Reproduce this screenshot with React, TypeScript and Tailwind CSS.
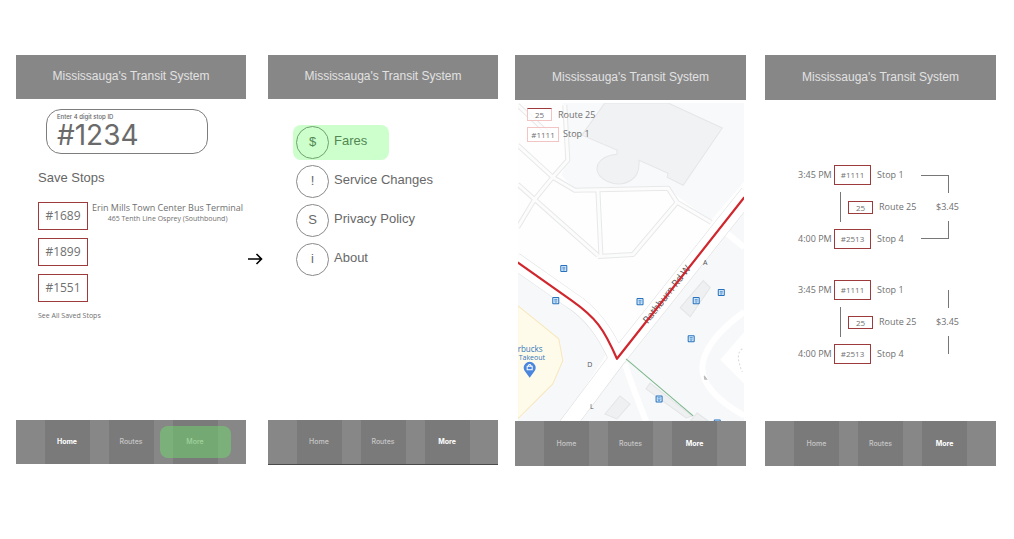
import type { ReactNode } from "react";

const TABS = ["Home", "Routes", "More"] as const;
type Tab = (typeof TABS)[number];

interface ScreenProps {
  active: Tab;
  highlighted?: Tab;
  tall?: boolean;
  underlined?: boolean;
  children: ReactNode;
}

function Screen({ active, highlighted, tall, underlined, children }: ScreenProps) {
  const bar = tall ? "h-[45px]" : "h-11";
  return (
    <section className="flex min-w-0 flex-col">
      <header className={`${bar} flex items-center justify-center bg-[#878787]`}>
        <h1 className="pb-0.5 font-['Liberation_Sans',sans-serif] text-[12px] leading-4 whitespace-nowrap text-[#e2e2e2]">
          Mississauga&apos;s Transit System
        </h1>
      </header>
      <main className="flex min-h-[321px] flex-col">{children}</main>
      <nav
        className={`${bar} flex justify-center gap-[19px] bg-[#878787] ${
          underlined ? "shadow-[0_1px_0_#4a4a4a]" : ""
        }`}
      >
        {TABS.map((tab) => (
          <button
            key={tab}
            type="button"
            className={`relative w-[45px] bg-[#7a7a7a] font-[Inter,sans-serif] text-[7px] leading-3 ${
              tab === active ? "font-bold text-white" : "font-medium text-[#c6c6c6]"
            }`}
          >
            {tab}
            {tab === highlighted && (
              <span className="absolute inset-x-[-13px] inset-y-1.5 rounded-lg bg-[#6fe26b]/45" />
            )}
          </button>
        ))}
      </nav>
    </section>
  );
}

function HomeScreen() {
  return (
    <Screen active="Home" highlighted="More">
      <div className="mt-2.5 mr-[38px] ml-[30px] flex h-[45px] flex-col rounded-[15px] border border-[#7d7d7d] pt-1 pl-2.5">
        <label
          htmlFor="stop-id"
          className="font-[Inter,sans-serif] text-[6px] leading-[6px] font-medium text-[#666]"
        >
          Enter 4 digit stop ID
        </label>
        <input
          id="stop-id"
          defaultValue="#1234"
          className="h-[30px] w-full bg-transparent font-[Inter,sans-serif] text-[28px] leading-[30px] text-[#6a6a6a] outline-none"
        />
      </div>
      <div className="flex flex-col pl-[22px]">
        <h2 className="mt-4 font-['Liberation_Sans',sans-serif] text-[13px] leading-4 text-[#666]">
          Save Stops
        </h2>
        <ul className="mt-4 flex flex-col gap-2 font-['Open_Sans',sans-serif] text-[#707070]">
          <li className="flex gap-1">
            <StopNumber>#1689</StopNumber>
            <div className="text-center whitespace-nowrap">
              <p className="text-[9px] leading-3">Erin Mills Town Center Bus Terminal</p>
              <p className="text-[7px] leading-[10px]">465 Tenth Line Osprey (Southbound)</p>
            </div>
          </li>
          <li className="flex">
            <StopNumber>#1899</StopNumber>
          </li>
          <li className="flex">
            <StopNumber>#1551</StopNumber>
          </li>
        </ul>
        <a
          href="#saved"
          className="mt-2 font-['Open_Sans',sans-serif] text-[7px] leading-3 text-[#707070]"
        >
          See All Saved Stops
        </a>
      </div>
    </Screen>
  );
}

function StopNumber({ children }: { children: ReactNode }) {
  return (
    <a
      href="#stop"
      className="flex h-7 w-[50px] items-center justify-center border border-[#9c3a3c] text-[12px] leading-4"
    >
      {children}
    </a>
  );
}

const MENU = [
  { mark: "$", label: "Fares" },
  { mark: "!", label: "Service Changes" },
  { mark: "S", label: "Privacy Policy" },
  { mark: "i", label: "About" },
];

function MoreScreen() {
  return (
    <Screen active="More" underlined>
      <ul className="mt-[27px] flex flex-col items-start gap-1.5 pl-7 font-['Liberation_Sans',sans-serif] text-[13px] leading-4 text-[#686868]">
        {MENU.map(({ mark, label }, i) => (
          <li key={label} className="relative">
            <a href="#menu" className="flex items-center gap-[5px]">
              <span className="flex size-[33px] items-center justify-center rounded-full border border-[#8a8a8a] pb-0.5">
                {mark}
              </span>
              <span className="pb-1">{label}</span>
            </a>
            {i === 0 && (
              <span className="absolute -inset-y-px -left-[3px] w-24 rounded-lg bg-[#00ff00]/20" />
            )}
          </li>
        ))}
      </ul>
    </Screen>
  );
}

const BUS_STOPS = [
  [46, 165],
  [38, 197],
  [122, 198],
  [178, 197],
  [203, 189],
  [173, 235],
  [141, 295],
  [199, 319],
];

const LANES =
  "M0 42 L35 74 L57 87 L150 85 L159 99 L193 119 M47 2 L50 57 L35 74 L17 96 L0 124 M0 81 L80 152 M80 87 L83 152 M159 99 L115 151 L80 153 M0 2 L30 30";

function TransitMap() {
  return (
    <svg
      viewBox="0 0 226 317"
      preserveAspectRatio="xMidYMid slice"
      className="absolute inset-0 size-full"
      role="img"
      aria-label="Route map"
    >
      <rect width="226" height="317" fill="#fefefe" />
      <path d="M45 0 L50 20 L49 57 L44 72 L58 87 L149 85 L192 118 L226 78 V0Z" fill="#f8f9fa" />
      <path d="M0 165 L55 203 L80 225 L92 245 L45 317 H0Z" fill="#f7f8fa" />
      <path d="M226 105 L107 255 L60 317 H226Z" fill="#f7f8fa" />
      <path d="M0 202 L41 235 L45 257 L35 280 L0 315Z" fill="#fffbea" stroke="#f8e6bd" />
      <path
        d="M87 0 H150 L204 25 L165 82 L149 74 L150 70 L121 57 Q122 72 113 77 Q102 84 89 78 Q76 71 80 61 Q85 52 99 51 V47 L64 32Z"
        fill="#f1f2f3"
        stroke="#e5e6e7"
      />
      <g fill="none" strokeLinejoin="round">
        <path d={LANES} stroke="#e7e8e9" strokeWidth="5" />
        <path d={LANES} stroke="#fcfcfc" strokeWidth="3" />
        <path
          d="M205 127 L226 144 M107 260 Q115 285 128 317 M226 208 Q185 238 184 264 Q184 288 226 312"
          stroke="#fff"
          strokeWidth="6"
        />
        <path d="M226 228 L202 256 L226 280" fill="#fff" stroke="none" />
        <path
          d="M230 90 L99 255 L48 323 M-3 157 L54 197 Q82 215 99 255"
          stroke="#dcdddf"
          strokeWidth="17"
        />
        <path
          d="M230 90 L99 255 L48 323 M-3 157 L54 197 Q82 215 99 255"
          stroke="#fff"
          strokeWidth="16"
        />
      </g>
      <g fill="#eff0f1" stroke="#e4e5e6">
        <path d="M185 177 L192 184 L172 213 L162 204Z" />
        <path d="M102 292 L112 300 L99 315 L87 310Z" />
        <path d="M132 279 L174 312 L168 314 L128 285Z" />
        <path d="M179 309 L190 317 H172Z" />
      </g>
      <path d="M224 245 Q216 250 224 268" fill="none" stroke="#d8d8d8" strokeDasharray="2 2" />
      <path d="M108 255 L175 312" stroke="#79b68a" strokeWidth="1" />
      <text
        transform="translate(149 191) rotate(-52)"
        textAnchor="middle"
        y="3"
        className="fill-[#585858] font-['Open_Sans',sans-serif] text-[10px]"
      >
        Rathburn Rd W
      </text>
      <path
        d="M0 159 L54 197 C78 214 86 225 99 255 L226 94"
        fill="none"
        stroke="#d0262d"
        strokeWidth="2.2"
        strokeLinejoin="round"
      />
      {BUS_STOPS.map(([x, y]) => (
        <g key={`${x}-${y}`} transform={`translate(${x} ${y})`}>
          <rect x="-3" y="-3" width="6" height="6" rx="0.5" fill="#d9ebfb" stroke="#2671bd" />
          <path d="M-1.500 -1.200 H1.500 M-1.500 0.300 H1.500 M-1 1.500 H1" fill="none" stroke="#3e86cc" strokeWidth="0.8" />
        </g>
      ))}
      <g className="font-['Open_Sans',sans-serif] text-[7px]" fill="#555" textAnchor="middle">
        <text x="187" y="161">A</text>
        <text x="72" y="263">D</text>
        <text x="74" y="305">L</text>
      </g>
      <path d="M186 272 L188.500 275.500 L186.500 275.500Z" fill="#bbb" stroke="#bbb" />
      <g className="font-['Open_Sans',sans-serif]" fill="#3478bb">
        <text x="0" y="248" className="text-[8px]">
          rbucks
        </text>
        <text x="1" y="256" className="text-[7px]">
          Takeout
        </text>
      </g>
      <path d="M12 274 L8 268.500 A6 6 0 1 1 16 268.500Z" fill="#4a86dd" />
      <path
        d="M9.500 262.500 H14.500 V266 H9.500Z M10.500 262 Q12 259.500 13.500 262"
        fill="none"
        stroke="#fff"
      />
    </svg>
  );
}

function MapScreen() {
  return (
    <Screen active="More" tall>
      <div className="relative mt-[3px] mr-0.5 ml-[3px] flex grow flex-col overflow-hidden">
        <TransitMap />
        <div className="relative flex flex-col items-start gap-1.5 pt-[5px] pl-[9px] font-['Open_Sans',sans-serif] text-[9px] leading-[13px] text-[#707070]">
          <div className="flex gap-1.5">
            <span className="w-[25px] border border-[#f3c4c4] border-t-[#9c3a3c] bg-white/70 text-center text-[8px] leading-[11px]">
              25
            </span>
            <span>Route 25</span>
          </div>
          <div className="flex gap-1">
            <span className="w-8 border border-[#f3c4c4] bg-white/70 text-center text-[8px] leading-[13px]">
              #1111
            </span>
            <span>Stop 1</span>
          </div>
        </div>
      </div>
    </Screen>
  );
}

function Trip({ bracket }: { bracket: boolean }) {
  return (
    <div className="flex">
      <div className="w-[123px]">
        <TripStop time="3:45 PM" stop="#1111" label="Stop 1" />
        <div className="my-[7px] ml-[42px] flex h-[30px] items-center border-l border-[#777] pl-[7px]">
          <span className="w-[25px] border border-[#9c3a3c] text-center text-[8px] leading-[11px]">
            25
          </span>
          <span className="ml-1.5">Route 25</span>
        </div>
        <TripStop time="4:00 PM" stop="#2513" label="Stop 4" />
      </div>
      <div className="flex w-[28px] flex-col items-end py-2.5">
        <span className={`h-[18px] w-full border-r border-[#777] ${bracket ? "border-t" : ""}`} />
        <span className="-mr-2.5 flex h-[28px] items-center">$3.45</span>
        <span className={`h-[18px] w-full border-r border-[#777] ${bracket ? "border-b" : ""}`} />
      </div>
    </div>
  );
}

function TripStop({ time, stop, label }: { time: string; stop: string; label: string }) {
  return (
    <div className="flex h-5 items-center">
      <span className="w-9">{time}</span>
      <span className="mr-1.5 flex h-full w-[37px] items-center justify-center border border-[#9c3a3c] text-[8px]">
        {stop}
      </span>
      <span>{label}</span>
    </div>
  );
}

function FaresScreen() {
  return (
    <Screen active="More" tall>
      <div className="flex flex-col gap-[31px] pt-[65px] pl-[33px] font-['Open_Sans',sans-serif] text-[9px] leading-3 whitespace-nowrap text-[#707070]">
        <Trip bracket />
        <Trip bracket={false} />
      </div>
    </Screen>
  );
}

export default function App() {
  return (
    <div className="grid min-h-screen grid-cols-[230fr_22px_230fr_17px_231fr_19px_231fr] items-start bg-white pt-[55px] pr-[18px] pl-4">
      <HomeScreen />
      <div className="mt-[198px] -ml-1 flex justify-center">
        <svg
          viewBox="0 0 16 12"
          className="h-3 w-4"
          fill="none"
          stroke="#000"
          strokeWidth="1.6"
          aria-hidden="true"
        >
          <path d="M1 6 H14 M9.500 1 L14.500 6 L9.500 11" />
        </svg>
      </div>
      <MoreScreen />
      <div />
      <MapScreen />
      <div />
      <FaresScreen />
    </div>
  );
}
